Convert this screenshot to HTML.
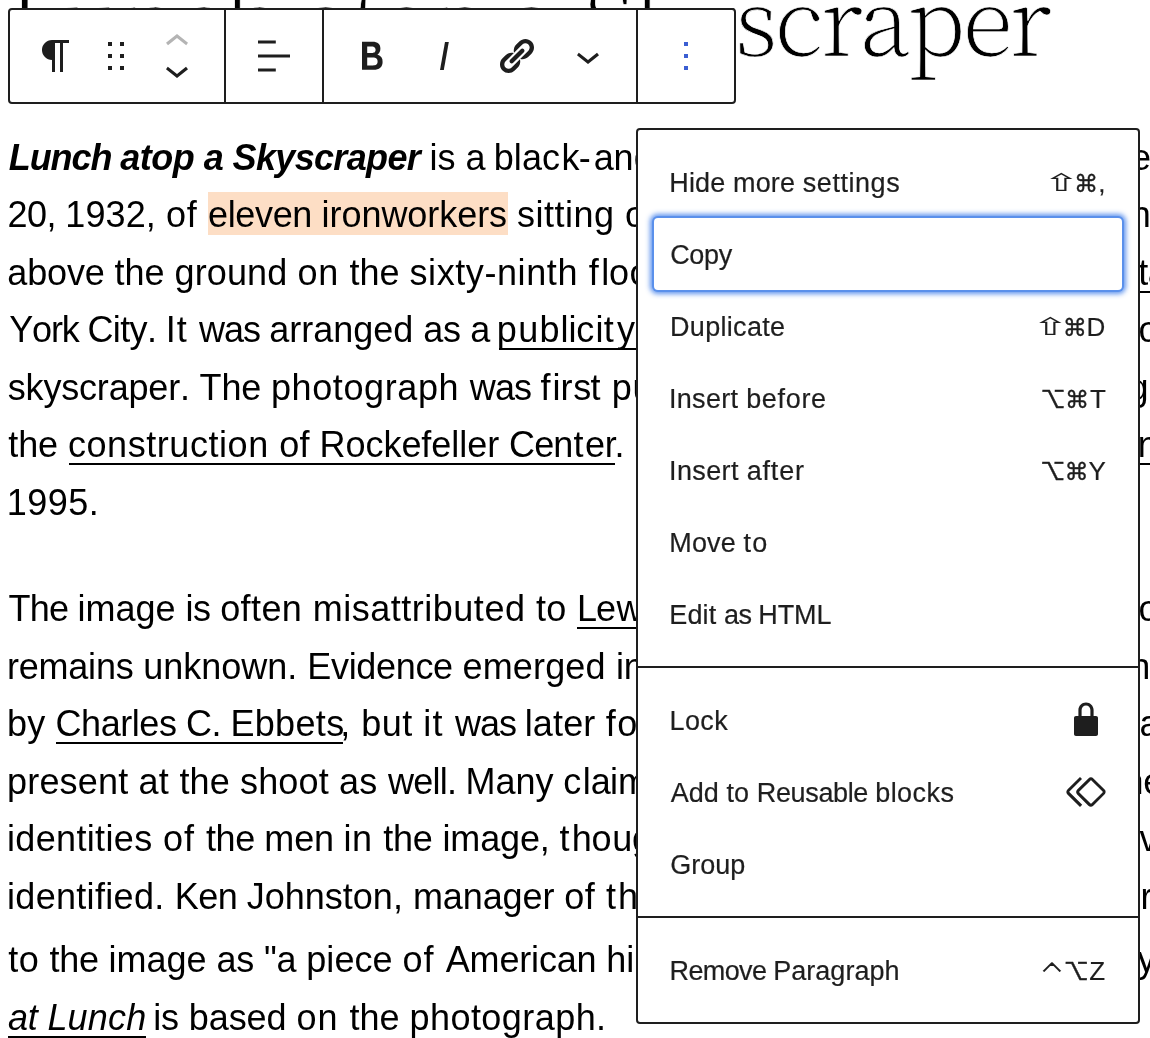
<!DOCTYPE html>
<html lang="en">
<head>
<meta charset="utf-8">
<title>Lunch atop a Skyscraper</title>
<style>
html,body{margin:0;padding:0;background:#fff;}
body{position:relative;width:1150px;height:1038px;overflow:hidden;font-family:"Liberation Sans","DejaVu Sans",sans-serif;}
.page{position:absolute;left:0;top:0;width:1150px;height:1038px;will-change:transform;}
/* post title */
h1{position:absolute;margin:0;left:0;top:56.2px;font:200 94px/0 "Noto Serif CJK SC","Liberation Serif",serif;color:#000;white-space:pre;font-kerning:none;margin-top:-0.4325em;letter-spacing:-3.4px;-webkit-text-stroke:0.7px #fff;}
h1 span{position:relative;display:inline-block;line-height:0;}
/* paragraph text */
.ln{position:absolute;margin:0;white-space:pre;font:400 36px/0 "Liberation Sans",sans-serif;color:#000;font-kerning:none;margin-top:-0.3465em;}
.ln i{font-style:italic;}
.ln b{font-style:italic;font-weight:700;}
.ul{position:absolute;height:2px;background:#000;}
.hl{position:absolute;left:208px;top:192px;width:300px;height:43px;background:#fddec5;}
/* block toolbar */
.tb{position:absolute;left:8px;top:8px;width:728px;height:96px;box-sizing:border-box;border:2px solid #1e1e1e;border-radius:4px;background:#fff;}
.dv{position:absolute;top:8px;width:2px;height:96px;background:#1e1e1e;}
svg.ic{position:absolute;width:48px;height:48px;fill:#1e1e1e;}
/* dropdown menu */
.menu{position:absolute;left:636px;top:128px;width:504px;height:896px;box-sizing:border-box;border:2px solid #1e1e1e;border-radius:4px;background:#fff;}
.sep{position:absolute;left:638px;width:500px;height:2px;background:#1e1e1e;}
.focus{position:absolute;left:654px;top:218px;width:468px;height:72px;border-radius:4px;background:#fff;box-shadow:0 0 0 2px #5a90eb,0 0 5px 3.5px rgba(80,138,236,.9);}
.m{position:absolute;white-space:pre;font:400 27px/0 "Liberation Sans",sans-serif;color:#1e1e1e;font-kerning:none;margin-top:-0.3465em;-webkit-text-stroke:0.2px #1e1e1e;}
.k{position:absolute;left:0;top:0;white-space:pre;line-height:0;color:#1e1e1e;}
.k span{position:relative;display:inline-block;}
</style>
</head>
<body>
<div class="page">
<h1><span style="left:6.30px">Lunch atop a </span><span style="left:13.76px">Sky</span><span style="left:16.95px">scraper</span></h1>

<!-- paragraph blocks -->
<div class="hl"></div>
<p class="ln" style="left:8.77px;top:170.3px"><b style="letter-spacing:-1.071px">Lunch </b><b style="letter-spacing:-0.498px">atop </b><b style="letter-spacing:-0.644px">a </b><b style="letter-spacing:-0.666px">Skyscraper </b><span style="letter-spacing:0.026px">is </span><span style="letter-spacing:-0.907px">a </span><span style="letter-spacing:0.083px">bla</span><span style="letter-spacing:1.504px">c</span><span style="letter-spacing:-0.674px">k</span><span style="letter-spacing:2.882px">-</span><span style="letter-spacing:-0.383px">a</span><span style="letter-spacing:0.357px">n</span><span style="letter-spacing:5.956px">d-white photograph tak</span><span style="letter-spacing:-0.400px">en on September</span></p>
<p class="ln" style="left:7.59px;top:227.3px"><span style="letter-spacing:-0.595px">20, </span><span style="letter-spacing:0.107px">1932, </span><span style="letter-spacing:0.686px">of </span><span style="letter-spacing:-0.366px">eleven </span><span style="letter-spacing:-0.054px">ironworkers </span><span style="letter-spacing:0.493px">sitting </span><span style="letter-spacing:3.590px">on a steel beam, eating lu</span><span style="letter-spacing:-0.400px">nch, 850 feet</span></p>
<p class="ln" style="left:7.27px;top:285.3px"><span style="letter-spacing:-0.151px">above </span><span style="letter-spacing:-0.003px">the </span><span style="letter-spacing:0.129px">ground </span><span style="letter-spacing:0.641px">on </span><span style="letter-spacing:-0.026px">the </span><span style="letter-spacing:0.595px">sixty-ninth </span><span style="letter-spacing:2.482px">f</span><span style="letter-spacing:-0.184px">l</span><span style="letter-spacing:0.479px">o</span><span style="letter-spacing:-0.488px">or of the RCA Building in Manhat</span><span style="letter-spacing:-0.400px">tan, New</span></p>
<p class="ln" style="left:9.21px;top:342.3px"><span style="letter-spacing:-1.172px">York </span><span style="letter-spacing:-0.616px">City. </span><span style="letter-spacing:1.056px">It </span><span style="letter-spacing:-0.901px">was </span><span style="letter-spacing:-0.012px">arranged </span><span style="letter-spacing:-0.374px">as </span><span style="letter-spacing:-1.707px">a </span><span style="letter-spacing:1.279px">pu</span><span style="letter-spacing:0.973px">b</span><span style="letter-spacing:0.120px">l</span><span style="letter-spacing:-0.219px">i</span><span style="letter-spacing:1.121px">c</span><span style="letter-spacing:0.265px">i</span><span style="letter-spacing:3.255px">t</span><span style="letter-spacing:1.844px">y stunt, part of a campaign pr</span><span style="letter-spacing:-0.400px">omoting the</span></p>
<p class="ln" style="left:7.80px;top:400.3px"><span style="letter-spacing:-0.188px">skyscraper. </span><span style="letter-spacing:-0.162px">The </span><span style="letter-spacing:0.601px">photograph </span><span style="letter-spacing:-0.846px">was </span><span style="letter-spacing:2.000px">f</span><span style="letter-spacing:0.020px">i</span><span style="letter-spacing:0.900px">r</span><span style="letter-spacing:-0.743px">s</span><span style="letter-spacing:0.510px">t </span><span style="letter-spacing:0.861px">p</span><span style="letter-spacing:0.190px">ublished in October 1932 durin</span><span style="letter-spacing:-0.400px">g</span></p>
<p class="ln" style="left:8.26px;top:457.3px"><span style="letter-spacing:-0.083px">the </span><span style="letter-spacing:0.555px">construction </span><span style="letter-spacing:0.078px">of </span><span style="letter-spacing:-0.046px">Rockefeller </span><span style="letter-spacing:-0.891px">Ce</span><span style="letter-spacing:0.024px">n</span><span style="letter-spacing:1.614px">t</span><span style="letter-spacing:-0.383px">e</span><span style="letter-spacing:-2.185px">r</span><span style="letter-spacing:2.130px">. </span><span style="letter-spacing:0.156px">It was acquired by the Bettman</span><span style="letter-spacing:-0.400px">n archive in</span></p>
<p class="ln" style="left:6.66px;top:515.3px"><span style="letter-spacing:0.510px">1995.</span></p>
<p class="ln" style="left:8.59px;top:621.3px"><span style="letter-spacing:-0.809px">The </span><span style="letter-spacing:0.008px">image </span><span style="letter-spacing:-0.435px">is </span><span style="letter-spacing:0.392px">often </span><span style="letter-spacing:0.518px">misattributed </span><span style="letter-spacing:0.355px">to </span><span style="letter-spacing:-1.198px">L</span><span style="letter-spacing:0.461px">e</span><span style="letter-spacing:2.409px">wis Hine, but the actual phot</span><span style="letter-spacing:-0.400px">ographer</span></p>
<p class="ln" style="left:7.01px;top:679.3px"><span style="letter-spacing:-0.224px">remains </span><span style="letter-spacing:-0.003px">unknown. </span><span style="letter-spacing:-0.330px">Evidence </span><span style="letter-spacing:0.167px">emerged </span><span style="letter-spacing:-0.180px">i</span><span style="letter-spacing:6.364px">n 2003 that it was take</span><span style="letter-spacing:-0.400px">n</span></p>
<p class="ln" style="left:7.08px;top:736.3px"><span style="letter-spacing:0.123px">by </span><span style="letter-spacing:-0.431px">Charles </span><span style="letter-spacing:-0.576px">C. </span><span style="letter-spacing:0.335px">Ebbets</span><span style="letter-spacing:0.505px;margin-left:-4.17px">, </span><span style="letter-spacing:0.491px">but </span><span style="letter-spacing:1.253px">it </span><span style="letter-spacing:-1.125px">was </span><span style="letter-spacing:0.164px">later </span><span style="letter-spacing:1.596px">f</span><span style="letter-spacing:5.392px">ound that another man w</span><span style="letter-spacing:-0.400px">as also</span></p>
<p class="ln" style="left:7.08px;top:794.3px"><span style="letter-spacing:0.164px">present </span><span style="letter-spacing:0.320px">at </span><span style="letter-spacing:0.124px">the </span><span style="letter-spacing:0.151px">shoot </span><span style="letter-spacing:0.353px">as </span><span style="letter-spacing:-0.754px">well. </span><span style="letter-spacing:-0.062px">Many </span><span style="letter-spacing:1.504px">c</span><span style="letter-spacing:-0.102px">l</span><span style="letter-spacing:-0.900px">a</span><span style="letter-spacing:0.220px">i</span><span style="letter-spacing:-0.097px">ms have been made regarding t</span><span style="letter-spacing:-0.400px">he actual</span></p>
<p class="ln" style="left:6.99px;top:851.3px"><span style="letter-spacing:0.346px">identities </span><span style="letter-spacing:1.047px">of </span><span style="letter-spacing:-0.448px">the </span><span style="letter-spacing:-0.188px">men </span><span style="letter-spacing:0.514px">in </span><span style="letter-spacing:-0.178px">the </span><span style="letter-spacing:-0.156px">image, </span><span style="letter-spacing:2.347px">t</span><span style="letter-spacing:-0.337px">h</span><span style="letter-spacing:0.752px">o</span><span style="letter-spacing:-0.295px">u</span><span style="letter-spacing:3.583px">gh only a few are conclusi</span><span style="letter-spacing:-0.400px">vely</span></p>
<p class="ln" style="left:6.99px;top:909.3px"><span style="letter-spacing:0.312px">identified. </span><span style="letter-spacing:-0.542px">Ken </span><span style="letter-spacing:0.006px">Johnston, </span><span style="letter-spacing:-0.101px">manager </span><span style="letter-spacing:0.580px">of </span><span style="letter-spacing:1.947px">t</span><span style="letter-spacing:6.714px">he Corbis archive, has </span><span style="letter-spacing:-0.400px">referred</span></p>
<p class="ln" style="left:8.26px;top:972.3px"><span style="letter-spacing:0.392px">to </span><span style="letter-spacing:-0.228px">the </span><span style="letter-spacing:-0.029px">image </span><span style="letter-spacing:-0.174px">as </span><span style="letter-spacing:-0.165px">"a </span><span style="letter-spacing:0.024px">piece </span><span style="letter-spacing:1.072px">of </span><span style="letter-spacing:-0.175px">American </span><span style="letter-spacing:0.066px">h</span><span style="letter-spacing:3.708px">i</span><span style="letter-spacing:2.240px">story". The film documentar</span><span style="letter-spacing:-0.400px">y Men</span></p>
<p class="ln" style="left:7.99px;top:1030.3px"><i style="letter-spacing:-0.208px">at </i><i style="letter-spacing:0.204px">Lunch</i><span style="letter-spacing:-3.310px"> </span><span style="letter-spacing:-0.171px">is </span><span style="letter-spacing:-0.047px">based </span><span style="letter-spacing:0.974px">on </span><span style="letter-spacing:-0.006px">the </span><span style="letter-spacing:0.444px">photograph.</span></p>
<i class="ul" style="left:498.5px;top:348px;width:141.5px"></i>
<i class="ul" style="left:69px;top:463px;width:546.2px"></i>
<i class="ul" style="left:577.4px;top:627px;width:62.6px"></i>
<i class="ul" style="left:56px;top:742px;width:287px"></i>
<i class="ul" style="left:8px;top:1036px;width:138px"></i>
<i class="ul" style="left:1138px;top:291px;width:12px"></i>
<i class="ul" style="left:1138px;top:463px;width:12px"></i>

<!-- block toolbar -->
<div class="tb" role="toolbar" aria-label="Block tools"></div>
<div class="dv" style="left:224px"></div>
<div class="dv" style="left:322px"></div>
<div class="dv" style="left:636px"></div>
<svg class="ic" style="left:32px;top:32px" viewBox="0 0 24 24"><path d="m9.99609 14v-.2251l.00391.0001v6.225h1.5v-14.5h2.5v14.5h1.5v-14.5h3v-1.5h-8.50391c-2.76142 0-5 2.23858-5 5 0 2.7614 2.23858 5 5 5z"/></svg>
<svg class="ic" style="left:91.5px;top:32px" viewBox="0 0 24 24"><path d="M8 7h2V5H8v2zm0 6h2v-2H8v2zm0 6h2v-2H8v2zm6-14v2h2V5h-2zm0 8h2v-2h-2v2zm0 6h2v-2h-2v2z"/></svg>
<svg class="ic" style="left:153.4px;top:18px;fill:#b4b4b4" viewBox="0 0 24 24"><path d="M6.5 12.4L12 8l5.5 4.4-.9 1.2L12 10l-4.5 3.6-1-1.2z"/></svg>
<svg class="ic" style="left:153.4px;top:46px" viewBox="0 0 24 24"><path d="M17.5 11.6L12 16l-5.5-4.4.9-1.2L12 14l4.500000000000001-3.6 1 1.2z"/></svg>
<svg class="ic" style="left:250px;top:32px" viewBox="0 0 24 24"><path d="M4 19.8h8.9v-1.5H4v1.5zm8.9-15.6H4v1.5h8.9V4.2zm-8.9 7v1.5h16v-1.5H4z"/></svg>
<svg class="ic" style="left:348px;top:32px" viewBox="0 0 24 24"><path d="M14.7 11.3c1-.6 1.5-1.6 1.5-3 0-2.3-1.3-3.4-4-3.4H7v14h5.8c1.4 0 2.5-.3 3.3-1 .8-.7 1.2-1.7 1.2-2.900000000000001.1-1.9-.8-3.1-2.6-3.7zm-5.1-4h2.3c.6 0 1.1.1 1.4.4.3.3.5.7.5 1.2s-.2 1-.5 1.200000000000001c-.3.3-.8.4-1.4.4H9.6V7.3zm4.6 9c-.4.3-1 .4-1.7.4H9.6v-3.9h2.9c.7 0 1.3.2 1.7.5.4.3.6.8.6 1.5s-.2 1.2-.6 1.5z"/></svg>
<svg class="ic" style="left:420px;top:32px" viewBox="0 0 24 24"><path d="M12.5 5L10 19h1.9l2.5-14z"/></svg>
<svg class="ic" style="left:492px;top:32px" viewBox="-2 -2 24 24"><path d="M17.74 2.76c1.68 1.69 1.68 4.41 0 6.100000000000001l-1.53 1.52c-1.12 1.12-2.7 1.47-4.14 1.09l2.62-2.61.76-.77.76-.76c.84-.84.84-2.2 0-3.04-.84-.85-2.2-.85-3.04 0l-.77.76-3.38 3.38c-.37-1.44-.02-3.02 1.1-4.14l1.52-1.53c1.69-1.68 4.42-1.68 6.1 0zM8.59 13.43l5.34-5.34c.42-.42.42-1.1 0-1.52-.44-.43-1.13-.39-1.53 0l-5.33 5.34c-.42.42-.42 1.1 0 1.52.44.43 1.13.39 1.52 0zm-.76 2.29l4.14-4.15c.38 1.44.03 3.02-1.09 4.14l-1.52 1.53c-1.69 1.68-4.41 1.68-6.1 0-1.68-1.68-1.68-4.42 0-6.1l1.53-1.52c1.12-1.12 2.7-1.47 4.14-1.1l-4.14 4.150000000000001c-.85.84-.85 2.2 0 3.05.84.84 2.2.84 3.04 0z"/></svg>
<svg class="ic" style="left:564px;top:32px" viewBox="0 0 24 24"><path d="M17.5 11.6L12 16l-5.5-4.4.9-1.2L12 14l4.5-3.6 1 1.2z"/></svg>
<svg class="ic" style="left:662px;top:32px;fill:#3b5ed2" viewBox="0 0 24 24"><path d="M13 19h-2v-2h2v2zm0-6h-2v-2h2v2zm0-6h-2V5h2v2z"/></svg>

<!-- block settings menu -->
<div class="menu" role="menu" aria-label="Options"></div>
<div class="sep" style="top:666px"></div>
<div class="sep" style="top:916px"></div>
<div class="focus" role="presentation"></div>
<div class="m" role="menuitem" style="left:669.29px;top:192.3px"><span style="letter-spacing:0.158px">Hide </span><span style="letter-spacing:0.125px">more </span><span style="letter-spacing:0.554px">settings</span></div>
<div class="m" role="menuitem" style="left:670.13px;top:264.3px"><span style="letter-spacing:-0.302px">Copy</span></div>
<div class="m" role="menuitem" style="left:669.99px;top:336.3px"><span style="letter-spacing:0.319px">Duplicate</span></div>
<div class="m" role="menuitem" style="left:669.01px;top:408.3px"><span style="letter-spacing:0.303px">Insert </span><span style="letter-spacing:0.677px">before</span></div>
<div class="m" role="menuitem" style="left:669.01px;top:480.3px"><span style="letter-spacing:0.388px">Insert </span><span style="letter-spacing:0.792px">after</span></div>
<div class="m" role="menuitem" style="left:669.29px;top:552.3px"><span style="letter-spacing:0.156px">Move </span><span style="letter-spacing:1.225px">to</span></div>
<div class="m" role="menuitem" style="left:669.29px;top:624.3px"><span style="letter-spacing:0.148px">Edit </span><span style="letter-spacing:-0.628px">as </span><span style="letter-spacing:-0.062px">HTML</span></div>
<div class="m" role="menuitem" style="left:669.59px;top:730.3px"><span style="letter-spacing:0.348px">Lock</span></div>
<div class="m" role="menuitem" style="left:670.65px;top:802.3px"><span style="letter-spacing:0.050px">Add </span><span style="letter-spacing:0.125px">to </span><span style="letter-spacing:-0.356px">Reusable </span><span style="letter-spacing:0.457px">blocks</span></div>
<div class="m" role="menuitem" style="left:670.14px;top:874.3px"><span style="letter-spacing:0.013px">Group</span></div>
<div class="m" role="menuitem" style="left:669.59px;top:980.3px"><span style="letter-spacing:-0.634px">Remove </span><span style="letter-spacing:0.035px">Paragraph</span></div>
<div class="k"><span style="font:400 24.4px/0 'DejaVu Sans',sans-serif;transform:scaleX(1.85);transform-origin:0 0;left:1042.10px;top:182.40px">⇧</span><span style="font:400 24.2px/0 'DejaVu Sans',sans-serif;-webkit-text-stroke:.35px #1e1e1e;left:1053.51px;top:182.50px">⌘</span><span style="font:400 26px/0 'Liberation Sans',sans-serif;-webkit-text-stroke:.2px #1e1e1e;left:1053.68px;top:182.59px">,</span></div>
<div class="k"><span style="font:400 24.4px/0 'DejaVu Sans',sans-serif;transform:scaleX(1.85);transform-origin:0 0;left:1031.20px;top:326.40px">⇧</span><span style="font:400 24.2px/0 'DejaVu Sans',sans-serif;-webkit-text-stroke:.35px #1e1e1e;left:1042.31px;top:326.50px">⌘</span><span style="font:400 26px/0 'Liberation Sans',sans-serif;-webkit-text-stroke:.2px #1e1e1e;left:1041.88px;top:326.60px">D</span></div>
<div class="k"><span style="font:400 25.0px/0 'DejaVu Serif','DejaVu Sans',serif;-webkit-text-stroke:.4px #1e1e1e;left:1040.55px;top:398.50px">⌥</span><span style="font:400 24.2px/0 'DejaVu Sans',sans-serif;-webkit-text-stroke:.35px #1e1e1e;left:1039.95px;top:398.50px">⌘</span><span style="font:400 26px/0 'Liberation Sans',sans-serif;-webkit-text-stroke:.2px #1e1e1e;left:1040.71px;top:398.60px">T</span></div>
<div class="k"><span style="font:400 25.0px/0 'DejaVu Serif','DejaVu Sans',serif;-webkit-text-stroke:.4px #1e1e1e;left:1040.25px;top:470.50px">⌥</span><span style="font:400 24.2px/0 'DejaVu Sans',sans-serif;-webkit-text-stroke:.35px #1e1e1e;left:1039.50px;top:470.50px">⌘</span><span style="font:400 26px/0 'Liberation Sans',sans-serif;-webkit-text-stroke:.2px #1e1e1e;left:1039.31px;top:470.60px">Y</span></div>
<div class="k"><span style="font:400 50px/0 'DejaVu Sans',sans-serif;-webkit-text-stroke:2.2px #fff;left:1031.00px;top:980.50px">⌃</span><span style="font:400 25.0px/0 'DejaVu Serif','DejaVu Sans',serif;-webkit-text-stroke:.4px #1e1e1e;left:1021.74px;top:962.70px">⌥</span><span style="font:400 26px/0 'Liberation Sans',sans-serif;-webkit-text-stroke:.2px #1e1e1e;left:1022.39px;top:962.60px">Z</span></div>
<svg class="ic" style="left:1062px;top:696px" viewBox="0 0 24 24"><path d="M17 10h-1.2V7c0-2.1-1.7-3.8-3.8-3.8-2.1 0-3.8 1.7-3.8 3.8v3H7c-.6 0-1 .4-1 1v8c0 .6.4 1 1 1h10c.6 0 1-.4 1-1v-8c0-.6-.4-1-1-1zm-2.8 0H9.8V7c0-1.2 1-2.2 2.2-2.2s2.2 1 2.2 2.2v3z"/></svg>
<svg class="ic" style="left:1062px;top:768px" viewBox="0 0 24 24"><path d="M21.3 10.8l-5.600000000000001-5.6c-.7-.7-1.8-.7-2.5 0l-5.6 5.6c-.7.7-.7 1.8 0 2.5l5.6 5.6c.3.3.8.5 1.2.5s.9-.2 1.2-.5l5.600000000000001-5.6c.8-.7.8-1.9.1-2.5zm-1 1.4l-5.600000000000001 5.6c-.1.1-.3.1-.4 0l-5.600000000000001-5.6c-.1-.1-.1-.3 0-.4l5.600000000000001-5.6s.1-.1.2-.1.1 0 .2.1l5.600000000000001 5.6c.1.1.1.3 0 .4zm-16.6-.4L10 5.500000000000001l-1-1-6.300000000000001 6.300000000000001c-.7.7-.7 1.8 0 2.500000000000001L9 19.5l1.1-1.1-6.300000000000001-6.300000000000001c-.2 0-.2-.2-.1-.30000000000000004z"/></svg>
</div>
</body>
</html>
